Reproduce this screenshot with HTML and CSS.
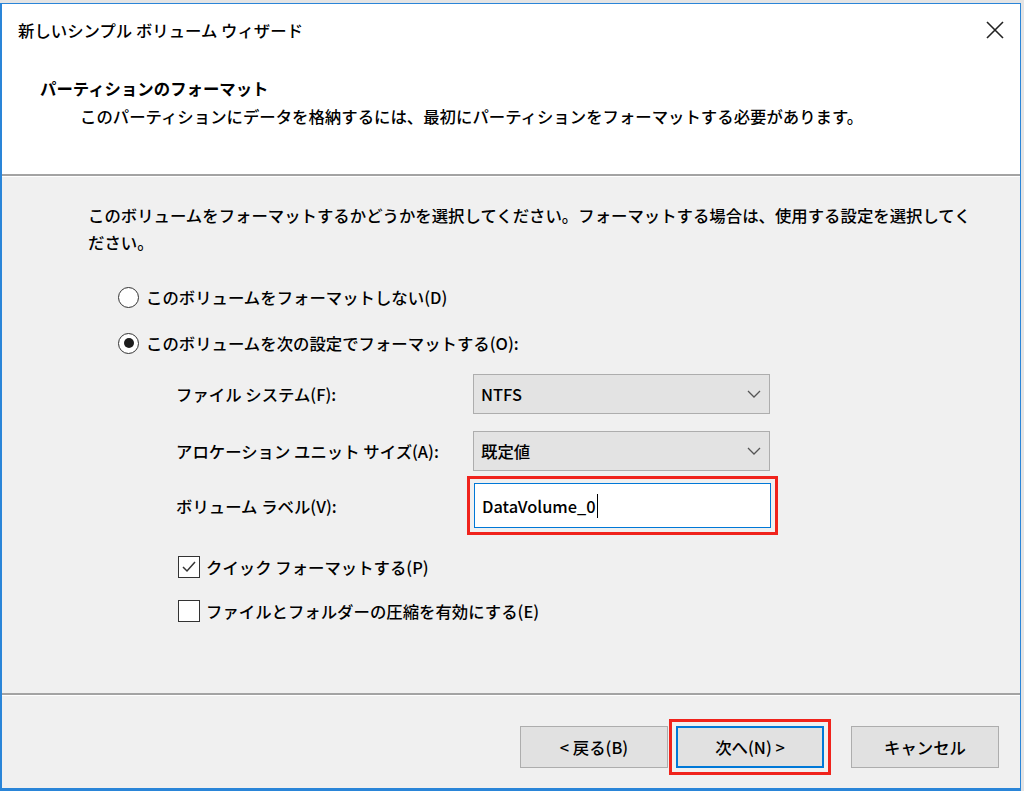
FILE: index.html
```html
<!DOCTYPE html>
<html lang="ja">
<head>
  <meta charset="UTF-8" />
  <meta name="viewport" content="width=device-width, initial-scale=1.0" />
  <title>新しいシンプル ボリューム ウィザード</title>
  <link rel="stylesheet" href="styles.css">
</head>
<body>
  <div class="dialog">
    <div class="head">
      <div class="titlebar">
        <span class="title">新しいシンプル ボリューム ウィザード</span>
        <svg class="close" width="20" height="20" viewBox="0 0 20 20">
          <path d="M2 2 L18 18 M18 2 L2 18" stroke="#222" stroke-width="1.6" fill="none" />
        </svg>
      </div>
      <div class="page-head">
        <div class="page-title">パーティションのフォーマット</div>
        <div class="page-sub">このパーティションにデータを格納するには、最初にパーティションをフォーマットする必要があります。</div>
      </div>
    </div>

    <div class="body">
      <p class="intro">このボリュームをフォーマットするかどうかを選択してください。フォーマットする場合は、使用する設定を選択してください。</p>

      <div class="radio-row"><span class="radio"></span>このボリュームをフォーマットしない(D)</div>
      <div class="radio-row second"><span class="radio checked"></span>このボリュームを次の設定でフォーマットする(O):</div>

      <div class="fields">
        <div class="field">
          <span class="label">ファイル システム(F):</span>
          <div class="combo">
            <span>NTFS</span>
            <svg width="14" height="8" viewBox="0 0 14 8"><path d="M1 1 L7 7 L13 1" stroke="#555" stroke-width="1.3" fill="none" /></svg>
          </div>
        </div>
        <div class="field alloc">
          <span class="label">アロケーション ユニット サイズ(A):</span>
          <div class="combo">
            <span>既定値</span>
            <svg width="14" height="8" viewBox="0 0 14 8"><path d="M1 1 L7 7 L13 1" stroke="#555" stroke-width="1.3" fill="none" /></svg>
          </div>
        </div>
        <div class="field vol">
          <span class="label">ボリューム ラベル(V):</span>
          <div class="textbox highlight"><span>DataVolume_0</span><span class="caret"></span></div>
        </div>
      </div>

      <div class="check-row"><span class="check on">
        <svg width="16" height="14" viewBox="0 0 16 14"><path d="M2 7 L6 11 L14 2" stroke="#333" stroke-width="1.5" fill="none" /></svg>
      </span>クイック フォーマットする(P)</div>
      <div class="check-row second"><span class="check"></span>ファイルとフォルダーの圧縮を有効にする(E)</div>
    </div>

    <div class="footer">
      <button class="btn">&lt; 戻る(B)</button>
      <button class="btn default highlight">次へ(N) &gt;</button>
      <button class="btn cancel">キャンセル</button>
    </div>
  </div>
</body>
</html>
```

FILE: styles.css
```css
body {
  margin: 0;
  padding-top: 3px;
  background: #e4e4e4;
  font-family: "Noto Sans CJK JP", "Noto Sans", sans-serif;
  font-size: 16.4px;
  font-weight: 500;
  color: #000;
}
.dialog {
  width: 1018px;
  height: 784px;
  border: 1px solid #2a85d8;
  border-left-width: 2px;
  border-bottom-width: 3px;
  background: #f0f0f0;
  display: flex;
  flex-direction: column;
}
.head {
  height: 170px;
  background: #fff;
  border-bottom: 2px solid #a3a3a3;
  flex-shrink: 0;
}
.titlebar {
  display: flex;
  align-items: center;
  justify-content: space-between;
  padding: 14px 15px 0 16px;
  height: 24px;
}
.title {
  line-height: 24px;
}
.page-head {
  padding: 32px 0 0 38px;
  line-height: 28px;
}
.page-title {
  font-weight: bold;
}
.page-sub {
  margin-left: 40px;
}
.body {
  height: 519px;
  border-top: 1px solid #fff;
  border-bottom: 2px solid #a3a3a3;
  padding: 25px 0 0 86px;
  box-sizing: border-box;
  flex-shrink: 0;
}
.intro {
  margin: 0;
  width: 890px;
  line-height: 27px;
}
.radio-row {
  display: flex;
  align-items: center;
  gap: 7px;
  height: 30px;
  margin: 26px 0 0 30px;
}
.radio-row.second {
  margin-top: 16px;
}
.radio {
  width: 19px;
  height: 19px;
  border: 1.5px solid #333;
  border-radius: 50%;
  background: #fff;
  display: flex;
  align-items: center;
  justify-content: center;
}
.radio.checked::after {
  content: "";
  width: 10px;
  height: 10px;
  border-radius: 50%;
  background: #1c1c1c;
}
.fields {
  margin: 16px 0 0 88px;
}
.field {
  display: flex;
  align-items: center;
}
.field.alloc {
  margin-top: 17px;
}
.field.vol {
  margin-top: 12px;
}
.label {
  width: 297px;
}
.combo {
  width: 297px;
  height: 40px;
  border: 1px solid #adadad;
  background: #e3e3e3;
  display: flex;
  align-items: center;
  justify-content: space-between;
  padding: 0 8px 0 7px;
  box-sizing: border-box;
}
.textbox {
  width: 297px;
  height: 45px;
  margin-left: 1px;
  box-sizing: border-box;
  border: 1px solid #0078d7;
  background: #fff;
  display: flex;
  align-items: center;
  padding-left: 7px;
}
.caret {
  width: 1px;
  height: 24px;
  background: #000;
  margin-left: 1px;
}
.highlight {
  outline: 3px solid #f0231c;
  outline-offset: 4px;
}
.check-row {
  display: flex;
  align-items: center;
  gap: 6px;
  height: 30px;
  margin: 24px 0 0 90px;
}
.check-row.second {
  margin-top: 14px;
}
.check {
  width: 20px;
  height: 20px;
  border: 1.5px solid #333;
  background: #fff;
  display: flex;
  align-items: center;
  justify-content: center;
}
.footer {
  flex: 1;
  border-top: 1px solid #fff;
  display: flex;
  justify-content: flex-end;
  align-items: flex-start;
  padding: 30px 21px 0 0;
}
.btn {
  width: 148px;
  height: 42px;
  background: #e1e1e1;
  border: 1px solid #adadad;
  font-family: inherit;
  font-size: 16.4px;
  font-weight: 500;
  color: #000;
  padding: 0;
  margin-left: 8px;
}
.btn.default {
  border: 2px solid #0078d7;
}
.btn.cancel {
  margin-left: 27px;
}
```
